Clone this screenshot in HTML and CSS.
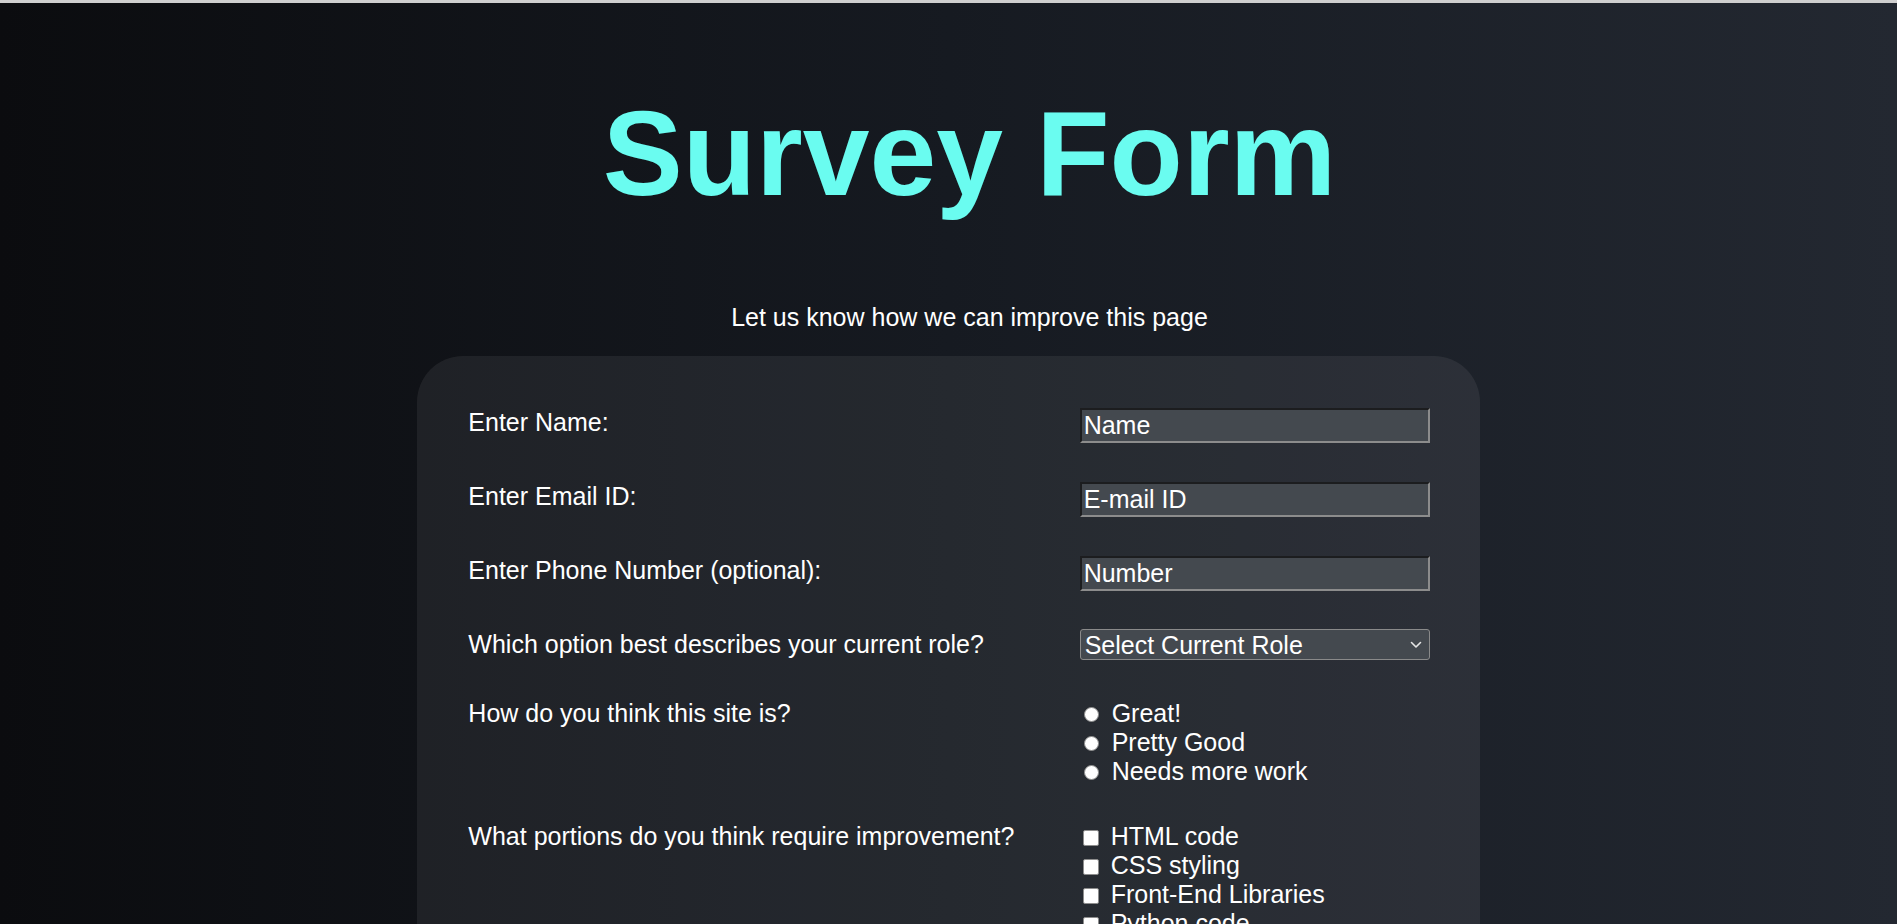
FILE: index.html
```html
<!DOCTYPE html>
<html lang="en">
<head>
<meta charset="utf-8">
<title>Survey Form</title>
<link rel="stylesheet" href="styles.css">
</head>
<body>
<div class="topbar"></div>
<header class="header">
  <h1 class="title" id="title">Survey Form</h1>
  <p class="description" id="description">Let us know how we can improve this page</p>
</header>
<form class="card" id="survey-form">
  <div class="row">
    <label class="label" for="name">Enter Name:</label>
    <input class="field" id="name" type="text" placeholder="Name">
  </div>
  <div class="row">
    <label class="label" for="email">Enter Email ID:</label>
    <input class="field" id="email" type="email" placeholder="E-mail ID">
  </div>
  <div class="row">
    <label class="label" for="number">Enter Phone Number (optional):</label>
    <input class="field" id="number" type="text" placeholder="Number">
  </div>
  <div class="row">
    <label class="label" for="dropdown">Which option best describes your current role?</label>
    <div class="select-wrap">
      <select class="select" id="dropdown">
        <option>Select Current Role</option>
        <option>Student</option>
        <option>Full Time Job</option>
        <option>Other</option>
      </select>
      <svg class="chevron" width="12" height="8" viewBox="0 0 12 8"><path d="M1.5 1.5 L6 6 L10.5 1.5" fill="none" stroke="#e6e6e6" stroke-width="1.6" stroke-linecap="round" stroke-linejoin="round"/></svg>
    </div>
  </div>
  <div class="row row-tight">
    <div class="label">How do you think this site is?</div>
    <div class="choices">
      <label class="choice"><input class="radio" type="radio" name="rating"><span>Great!</span></label>
      <label class="choice"><input class="radio" type="radio" name="rating"><span>Pretty Good</span></label>
      <label class="choice"><input class="radio" type="radio" name="rating"><span>Needs more work</span></label>
    </div>
  </div>
  <div class="row">
    <div class="label">What portions do you think require improvement?</div>
    <div class="choices">
      <label class="choice"><input class="check" type="checkbox"><span>HTML code</span></label>
      <label class="choice"><input class="check" type="checkbox"><span>CSS styling</span></label>
      <label class="choice"><input class="check" type="checkbox"><span>Front-End Libraries</span></label>
      <label class="choice"><input class="check" type="checkbox"><span>Python code</span></label>
      <label class="choice"><input class="check" type="checkbox"><span>Other</span></label>
    </div>
  </div>
  <div class="row">
    <label class="label" for="comments">Any other comments or suggestions?</label>
    <textarea class="area" id="comments" placeholder="Enter your comment here..."></textarea>
  </div>
</form>
</body>
</html>
```

FILE: styles.css
```css
html, body {
  margin: 0;
  padding: 0;
}
body {
  min-height: 100vh;
  background: linear-gradient(to right, #0b0c0f 0%, #161a21 50%, #232831 100%);
  font-family: "Liberation Sans", Arial, sans-serif;
  color: #ffffff;
}
.topbar {
  height: 3px;
  background: #cfcfcf;
}
.header {
  padding-left: 42px;
  text-align: center;
}
.title {
  margin: 81px 0 0;
  font-size: 120px;
  font-weight: bold;
  line-height: normal;
  color: #6afcf0;
}
.description {
  margin: 81px 0 24px;
  font-size: 25px;
  line-height: normal;
}
.card {
  width: 56%;
  margin: 0 auto;
  box-sizing: border-box;
  padding: 52px 50px 60px 51px;
  border-radius: 46px;
  background: rgba(255, 255, 255, 0.066);
}
.row {
  display: grid;
  grid-template-columns: 1fr 350px;
  align-items: start;
  margin-bottom: 39px;
}
.row-tight {
  margin-bottom: 36px;
}
.label {
  font-size: 25px;
  line-height: normal;
}
.field {
  box-sizing: border-box;
  width: 350px;
  margin: 0;
  padding: 1px 2px;
  font-family: "Liberation Sans", Arial, sans-serif;
  font-size: 25px;
  line-height: normal;
  color: #ffffff;
  background: #44494f;
  border-width: 2px;
  border-style: solid;
  border-color: #1c1d1f #8c8c8c #8c8c8c #1c1d1f;
  outline: none;
}
.field::placeholder {
  color: #ffffff;
  opacity: 1;
}
.select-wrap {
  position: relative;
  width: 350px;
}
.select {
  appearance: none;
  -webkit-appearance: none;
  box-sizing: border-box;
  display: block;
  width: 350px;
  height: 31px;
  margin: -1px 0 0;
  padding: 0 30px 0 4px;
  font-family: "Liberation Sans", Arial, sans-serif;
  font-size: 25px;
  color: #ffffff;
  background: #44494f;
  border: 1px solid #8a8a8a;
  border-radius: 3px;
}
.chevron {
  position: absolute;
  right: 8px;
  top: 11px;
  pointer-events: none;
}
.choices {
  display: flex;
  flex-direction: column;
}
.choice {
  display: flex;
  align-items: center;
  font-size: 25px;
  line-height: normal;
}
.radio {
  appearance: none;
  -webkit-appearance: none;
  box-sizing: border-box;
  width: 15px;
  height: 15px;
  margin: 2px 13px 0 4px;
  border: 1px solid #8d8d8d;
  border-radius: 50%;
  background: #ffffff;
  flex: none;
}
.check {
  appearance: none;
  -webkit-appearance: none;
  box-sizing: border-box;
  width: 16px;
  height: 16px;
  margin: 2px 12px 0 3px;
  border: 1px solid #8d8d8d;
  border-radius: 2px;
  background: #ffffff;
  flex: none;
}
.area {
  box-sizing: border-box;
  width: 350px;
  height: 120px;
  font-family: "Liberation Sans", Arial, sans-serif;
  font-size: 20px;
  color: #ffffff;
  background: #44494f;
  border: 2px solid #8c8c8c;
}
```
